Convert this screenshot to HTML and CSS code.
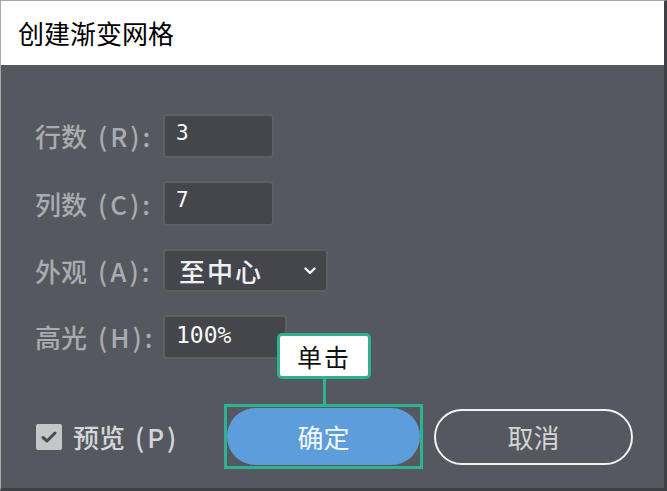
FILE: index.html
```html
<!DOCTYPE html>
<html lang="zh-CN">
<head>
<meta charset="utf-8">
<title>创建渐变网格</title>
<link rel="stylesheet" href="styles.css">
</head>
<body>
<div class="window">
  <div class="titlebar">创建渐变网格</div>
  <div class="body">
    <div class="form">
      <div class="row r1">
        <span class="label">行数<span class="key">(R):</span></span>
        <div class="field w1"><span class="num">3</span></div>
      </div>
      <div class="row r2">
        <span class="label">列数<span class="key">(C):</span></span>
        <div class="field w1"><span class="num">7</span></div>
      </div>
      <div class="row r3">
        <span class="label">外观<span class="key">(A):</span></span>
        <div class="field select">
          <span class="sel-text">至中心</span>
          <svg class="chev" width="12" height="8" viewBox="0 0 12 8"><path d="M1.5 1.5 L6 6 L10.5 1.5" fill="none" stroke="#f2f2f2" stroke-width="2.4" stroke-linecap="round" stroke-linejoin="round"/></svg>
        </div>
      </div>
      <div class="row r4">
        <span class="label">高光<span class="key">(H):</span></span>
        <div class="field w2"><span class="num big">100%</span></div>
      </div>
    </div>
    <div class="footer">
      <div class="preview">
        <span class="checkbox">
          <svg width="16" height="12" viewBox="0 0 16 12"><path d="M2 6.5 L6 10 L14 2" fill="none" stroke="#4b4c51" stroke-width="3" stroke-linecap="round" stroke-linejoin="round"/></svg>
        </span>
        <span class="label pv">预览<span class="key">(P)</span></span>
      </div>
      <div class="ok-wrap">
        <div class="btn ok">确定</div>
        <div class="callout">
          <div class="callout-box">单击</div>
          <div class="callout-line"></div>
        </div>
      </div>
      <div class="btn cancel">取消</div>
    </div>
  </div>
</div>
</body>
</html>
```

FILE: styles.css
```css
html, body {
  margin: 0;
  padding: 0;
  background: #55585f;
}
body {
  font-family: "Noto Sans CJK SC", "Noto Sans", sans-serif;
}
.window {
  width: 667px;
  height: 491px;
  box-sizing: border-box;
  border-top: 1px solid #a7a7a7;
  border-left: 1px solid #a7a7a7;
  border-right: 3px solid #3e4045;
  border-bottom: 3px solid #3e4045;
  background: #55585f;
  display: flex;
  flex-direction: column;
}
.titlebar {
  height: 64px;
  background: #ffffff;
  color: #000;
  font-size: 26px;
  line-height: 64px;
  padding-left: 17px;
  flex: none;
}
.body {
  flex: 1;
  display: flex;
  flex-direction: column;
}
.form {
  padding: 49px 0 0 34px;
  display: flex;
  flex-direction: column;
  gap: 23px;
}
.row {
  display: flex;
  align-items: center;
}
.label {
  width: 128px;
  flex: none;
  color: #a9abb0;
  font-size: 26px;
  font-weight: 500;
  line-height: 30px;
  white-space: nowrap;
}
.key {
  margin-left: 11px;
  letter-spacing: 3px;
}
.field {
  box-sizing: border-box;
  height: 44px;
  background: #45464b;
  border: 2px solid #5c5f66;
  border-radius: 4px;
  display: flex;
  align-items: center;
  padding-left: 11px;
  color: #fafafa;
}
.r2 .field { height: 45px; }
.r3 .field { height: 43px; }
.w1 { width: 111px; }
.w2 { width: 124px; }
.select {
  width: 165px;
  padding-left: 14px;
  padding-right: 10px;
  justify-content: space-between;
}
.num {
  font-family: "DejaVu Sans Mono", monospace;
  font-size: 21px;
  line-height: 21px;
  margin-top: -6px;
}
.num.big {
  font-size: 23px;
  margin-top: -4px;
}
.sel-text {
  font-size: 26px;
  font-weight: 500;
  letter-spacing: 2px;
  line-height: 30px;
  color: #eef0f3;
}
.chev { margin-top: 1px; }
.footer {
  margin-top: 45px;
  display: flex;
  align-items: center;
  padding-left: 35px;
}
.preview {
  width: 188px;
  display: flex;
  align-items: center;
  gap: 11px;
  flex: none;
}
.checkbox {
  width: 26px;
  height: 26px;
  background: #c5c6c8;
  border-radius: 2px;
  display: flex;
  align-items: center;
  justify-content: center;
}
.pv {
  width: auto;
  color: #d4d5d8;
}
.pv .key { margin-left: 10px; }
.ok-wrap {
  position: relative;
  box-sizing: border-box;
  width: 199px;
  height: 65px;
  border: 3px solid #2db38f;
  padding: 1px 0 0 0;
  flex: none;
  display: flex;
  justify-content: center;
}
.btn {
  box-sizing: border-box;
  height: 57px;
  border-radius: 29px;
  display: flex;
  align-items: center;
  justify-content: center;
  font-size: 26px;
}
.ok {
  width: 194px;
  background: #5e9ddb;
  color: #f4f7fb;
}
.cancel {
  width: 199px;
  margin-left: 11px;
  border: 2px solid #f2f2f2;
  color: #d3d4d6;
  height: 56px;
}
.callout {
  position: absolute;
  left: 50px;
  top: -74px;
  display: flex;
  flex-direction: column;
  align-items: center;
}
.callout-box {
  box-sizing: border-box;
  width: 94px;
  height: 46px;
  background: #fff;
  border: 3px solid #2db38f;
  border-radius: 5px;
  color: #111;
  font-size: 25px;
  letter-spacing: 2px;
  display: flex;
  align-items: center;
  justify-content: center;
}
.callout-line {
  width: 3px;
  height: 25px;
  background: #2db38f;
}
```
